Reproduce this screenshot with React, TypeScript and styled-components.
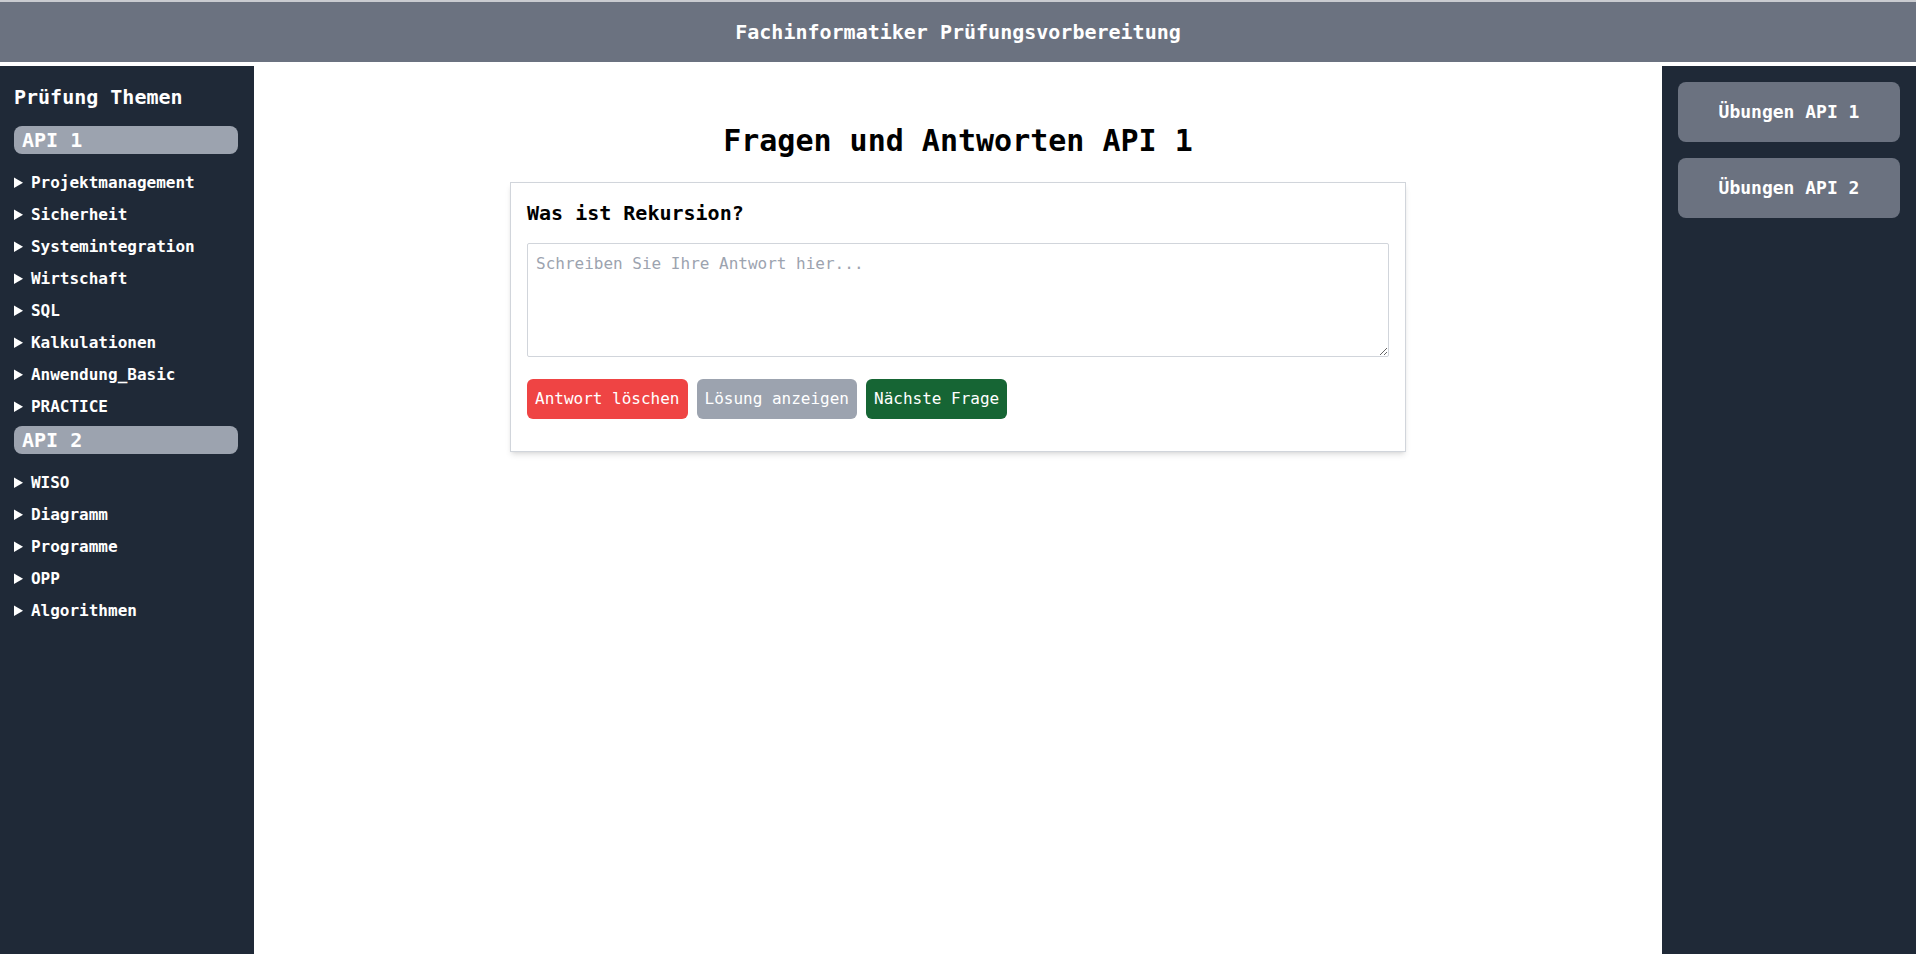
import React from "react";
import styled, { createGlobalStyle } from "styled-components";

const GlobalStyle = createGlobalStyle`
  html, body { margin: 0; padding: 0; background: #ffffff; }
  body { font-family: "DejaVu Sans Mono", "Liberation Mono", monospace; }
  * { box-sizing: border-box; }
`;

const Page = styled.div`
  display: flex;
  flex-direction: column;
  min-height: 954px;
  background: #ffffff;
`;

const Header = styled.header`
  border-top: 2px solid #c9cbd0;
  height: 62px;
  background: #6b7280;
  color: #ffffff;
  display: flex;
  align-items: center;
  justify-content: center;
  font-size: 20px;
  font-weight: 700;
  margin-bottom: 4px;
`;

const Body = styled.div`
  flex: 1;
  display: grid;
  grid-template-columns: 254px 1fr 254px;
  min-height: 888px;
`;

const Sidebar = styled.aside`
  background: #1f2937;
  color: #ffffff;
  padding: 16px 16px 16px 14px;
`;

const SideHeading = styled.h2`
  margin: 0 0 14px;
  font-size: 20px;
  line-height: 30px;
  font-weight: 700;
`;

const Group = styled.div<{ $first?: boolean }>`
  margin: ${(p) => (p.$first ? "0" : "3px")} 0 13px;
  background: #9ca3af;
  border-radius: 8px;
  height: 28px;
  padding: 0 8px;
  font-size: 20px;
  line-height: 28px;
  font-weight: 700;
`;

const TopicList = styled.div`
  display: flex;
  flex-direction: column;
`;

const Topic = styled.details`
  font-size: 16px;
  font-weight: 700;
  line-height: 24px;
`;

const TopicSummary = styled.summary`
  padding: 4px 0;
  cursor: pointer;
`;

const Main = styled.main`
  display: flex;
  flex-direction: column;
  align-items: center;
  padding: 57px 32px 32px;
`;

const Title = styled.h1`
  margin: 0 0 23px;
  font-size: 30px;
  line-height: 36px;
  font-weight: 700;
  color: #000000;
`;

const Card = styled.section`
  width: 896px;
  border: 1px solid #d1d5db;
  background: #ffffff;
  padding: 16px 16px 32px;
  box-shadow: 0 4px 6px -1px rgba(0, 0, 0, 0.1), 0 2px 4px -2px rgba(0, 0, 0, 0.1);
`;

const Question = styled.h3`
  margin: 0 0 16px;
  font-size: 20px;
  line-height: 28px;
  font-weight: 600;
  color: #000000;
`;

const Answer = styled.textarea`
  display: block;
  width: 100%;
  height: 114px;
  padding: 8px;
  border: 1px solid #d1d5db;
  border-radius: 2px;
  font-family: "DejaVu Sans Mono", "Liberation Mono", monospace;
  font-size: 16px;
  line-height: 24px;
  color: #111827;
  resize: both;
  &::placeholder { color: #9ca3af; }
`;

const Actions = styled.div`
  display: flex;
  gap: 9px;
  margin-top: 22px;
`;

const ActionButton = styled.button<{ $bg: string }>`
  background: ${(p) => p.$bg};
  color: #ffffff;
  border: none;
  border-radius: 6px;
  height: 40px;
  padding: 0 8px;
  font-family: "DejaVu Sans Mono", "Liberation Mono", monospace;
  font-size: 16px;
  line-height: 24px;
  cursor: pointer;
`;

const RightBar = styled.aside`
  background: #1f2937;
  padding: 16px;
  display: flex;
  flex-direction: column;
  gap: 16px;
`;

const ExerciseButton = styled.button`
  background: #6b7280;
  color: #ffffff;
  border: none;
  border-radius: 8px;
  padding: 16px;
  font-family: "DejaVu Sans Mono", "Liberation Mono", monospace;
  font-size: 18px;
  line-height: 28px;
  font-weight: 700;
  cursor: pointer;
`;

const api1 = [
  "Projektmanagement",
  "Sicherheit",
  "Systemintegration",
  "Wirtschaft",
  "SQL",
  "Kalkulationen",
  "Anwendung_Basic",
  "PRACTICE",
];
const api2 = ["WISO", "Diagramm", "Programme", "OPP", "Algorithmen"];

export default function App() {
  return (
    <>
      <GlobalStyle />
      <Page>
        <Header>Fachinformatiker Prüfungsvorbereitung</Header>
        <Body>
          <Sidebar>
            <SideHeading>Prüfung Themen</SideHeading>
            <Group $first>API 1</Group>
            <TopicList>
              {api1.map((t) => (
                <Topic key={t}>
                  <TopicSummary>{t}</TopicSummary>
                </Topic>
              ))}
            </TopicList>
            <Group>API 2</Group>
            <TopicList>
              {api2.map((t) => (
                <Topic key={t}>
                  <TopicSummary>{t}</TopicSummary>
                </Topic>
              ))}
            </TopicList>
          </Sidebar>
          <Main>
            <Title>Fragen und Antworten API 1</Title>
            <Card>
              <Question>Was ist Rekursion?</Question>
              <Answer placeholder="Schreiben Sie Ihre Antwort hier..." />
              <Actions>
                <ActionButton $bg="#ef4444">Antwort löschen</ActionButton>
                <ActionButton $bg="#9ca3af">Lösung anzeigen</ActionButton>
                <ActionButton $bg="#166534">Nächste Frage</ActionButton>
              </Actions>
            </Card>
          </Main>
          <RightBar>
            <ExerciseButton>Übungen API 1</ExerciseButton>
            <ExerciseButton>Übungen API 2</ExerciseButton>
          </RightBar>
        </Body>
      </Page>
    </>
  );
}
